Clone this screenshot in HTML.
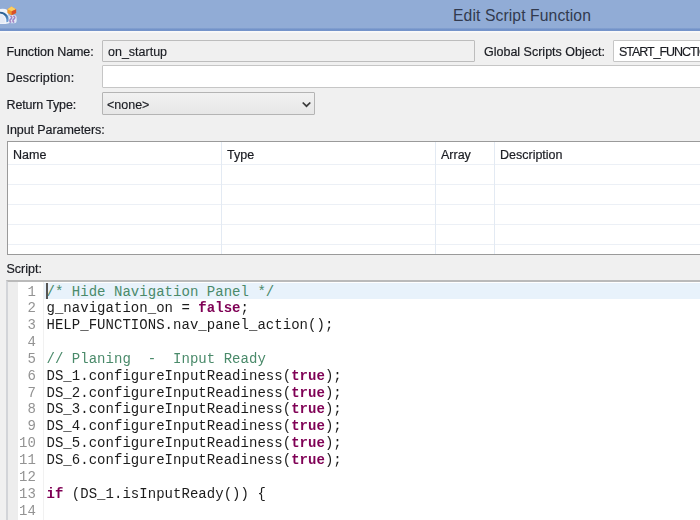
<!DOCTYPE html>
<html>
<head>
<meta charset="utf-8">
<style>
html,body{margin:0;padding:0;}
body{width:700px;height:520px;overflow:hidden;background:#f0f0f0;font-family:"Liberation Sans",sans-serif;position:relative;color:#1a1a1a;}
.abs{position:absolute;}
#titlebar{left:0;top:0;width:700px;height:31px;background:#91acd6;}
#titleline{left:0;top:28px;width:700px;height:3px;background:linear-gradient(#86a3d2,#6f90c7 60%,#7a98cc);}
#titlehl{left:0;top:31px;width:700px;height:2px;background:linear-gradient(#fbfbfb,#f5f5f5);}
#title{left:453px;top:7px;font-size:15.7px;color:#323a4e;white-space:nowrap;letter-spacing:0.1px;}
.lbl{font-size:12.5px;color:#1a1c22;white-space:nowrap;-webkit-text-stroke:0.2px #1a1c22;}
.inp{box-sizing:border-box;border:1px solid #c6c6c6;border-radius:1px;background:#fff;font-size:12.5px;white-space:nowrap;overflow:hidden;}
.inp span{position:absolute;left:5px;top:4px;color:#1a1c22;-webkit-text-stroke:0.15px #1a1c22;}
#table{left:7px;top:141px;width:700px;height:114px;background:#fff;border:1px solid #9a9a9a;border-right:none;box-sizing:border-box;}
.hl{position:absolute;left:0;width:700px;height:1px;background:#ecf0f6;}
.vl{position:absolute;top:0;width:1px;height:112px;background:#e3eaf3;}
.th{position:absolute;top:6px;font-size:12.5px;color:#1a1c22;-webkit-text-stroke:0.2px #1a1c22;}
#editor{left:6px;top:280px;width:700px;height:241px;background:#fff;border-top:2px solid #bababa;border-left:2px solid #d2d4d8;box-sizing:border-box;}
#curline{left:44px;top:283px;width:656px;height:16px;background:#e8f2fb;}
#gutter{left:8px;top:282px;width:10px;height:238px;background:#ededed;}
.ln{position:absolute;left:8px;width:28.1px;text-align:right;font-family:"Liberation Mono",monospace;font-size:14px;letter-spacing:0.1px;color:#939393;height:17px;line-height:17px;}
.code{position:absolute;left:46.5px;letter-spacing:0.035px;font-family:"Liberation Mono",monospace;font-size:14px;height:17px;line-height:17px;white-space:pre;color:#1c1c1c;}
.c{color:#4a8a6a;}
.k{color:#7f0055;font-weight:bold;}
</style>
</head>
<body>
<div id="wrap" style="position:absolute;left:0;top:0;width:700px;height:520px;filter:blur(0.4px);">
<div id="titlebar" class="abs"></div>
<div id="titleline" class="abs"></div>
<div id="titlehl" class="abs"></div>
<svg class="abs" style="left:0;top:5px" width="18" height="20" viewBox="0 0 18 20">
  <defs><linearGradient id="sw" x1="0" y1="0" x2="0.6" y2="1"><stop offset="0" stop-color="#2c5c8c"/><stop offset="0.5" stop-color="#2f6aa0"/><stop offset="1" stop-color="#6a9bd2"/></linearGradient></defs>
  <path d="M0 4 Q5 3.4 7.4 5 L8.6 10.4 L9 18.2 Q4 19.4 0 19 Z" fill="#f6f8fc" opacity="0.95"/>
  <rect x="8.6" y="10" width="8" height="8.2" rx="2.5" fill="#eef1f9" opacity="0.85"/>
  <path d="M0 9 Q3.4 9.6 4.6 13 Q5.2 16 4.8 17.8 Q2 18.4 0 18.2 Z" fill="#e4eaf5"/>
  <path d="M0 6.8 Q5 7 7.6 10.6 Q9.2 13.5 8.6 16 Q8 17.3 6.4 17.3 Q6.8 13.6 5.2 11.2 Q3.4 8.8 0 8.5 Z" fill="url(#sw)"/>
  <path d="M11.5 1.5 L16.1 4.3 L16.1 8 L11.6 10.2 L7.4 8 L7.4 4.3 Z" fill="#f0962a"/>
  <path d="M11.5 1.5 L16.1 4.3 L11.7 6.3 L7.4 4.3 Z" fill="#fbcf62"/>
  <path d="M11.7 6.3 L16.1 4.3 L16.1 8 L11.6 10.2 Z" fill="#d9502a"/>
  <path d="M10.4 10.9 q2.4 1.6 0.4 3.3 q-2 1.6 0.4 3.3 M13.4 10.9 q2.4 1.6 0.4 3.3 q-2 1.6 0.4 3.3" stroke="#9584cc" stroke-width="1.5" fill="none"/>
  <path d="M11.9 12 l0.1 0 M10 16 l0.1 0 M14.9 12.2 l0.1 0 M13 16 l0.1 0" stroke="#d88aa8" stroke-width="1" stroke-linecap="round"/>
</svg>
<div id="title" class="abs">Edit Script Function</div>

<div class="abs lbl" style="left:6.5px;top:45px;letter-spacing:-0.08px">Function Name:</div>
<div class="abs inp" style="left:102px;top:40px;width:373px;height:22px;background:#f0f0f0;border-color:#bdbdbd;"><span>on_startup</span></div>
<div class="abs lbl" style="left:484px;top:45px;">Global Scripts Object:</div>
<div class="abs inp" style="left:613px;top:40px;width:100px;height:22px;"><span style="left:5px;letter-spacing:-1.05px">START_FUNCTIONS</span></div>

<div class="abs lbl" style="left:6.5px;top:71px;letter-spacing:0.15px">Description:</div>
<div class="abs inp" style="left:102px;top:65px;width:610px;height:23px;"></div>

<div class="abs lbl" style="left:6.5px;top:98px;letter-spacing:-0.15px">Return Type:</div>
<div class="abs inp" style="left:102px;top:92px;width:213px;height:23px;background:linear-gradient(#f1f1f1,#e7e7e7);border-color:#b4b4b4;"><span style="left:4px;top:5px">&lt;none&gt;</span>
<svg style="position:absolute;left:197.7px;top:8px" width="12" height="8" viewBox="0 0 12 8"><path d="M1.7 1.5 L5.5 5.2 L9.3 1.5" stroke="#3a3a3a" stroke-width="1.7" fill="none"/></svg>
</div>

<div class="abs lbl" style="left:6.5px;top:123px;letter-spacing:-0.07px">Input Parameters:</div>

<div id="table" class="abs">
  <div class="hl" style="top:22px"></div>
  <div class="hl" style="top:42px"></div>
  <div class="hl" style="top:62px"></div>
  <div class="hl" style="top:82px"></div>
  <div class="hl" style="top:102px"></div>
  <div class="vl" style="left:213px"></div>
  <div class="vl" style="left:427px"></div>
  <div class="vl" style="left:486px"></div>
  <div class="th" style="left:5px">Name</div>
  <div class="th" style="left:219px">Type</div>
  <div class="th" style="left:433px">Array</div>
  <div class="th" style="left:492px">Description</div>
</div>

<div class="abs lbl" style="left:6.5px;top:262px;">Script:</div>

<div id="editor" class="abs"></div>
<div id="curline" class="abs"></div>
<div id="gutter" class="abs"></div>
<div class="abs" style="left:43px;top:282px;width:1px;height:238px;background:#f1f1f1;"></div>
<div id="lines">
<div class="ln" style="top:284px">1</div><div class="code" style="top:284px"><span class="c">/* Hide Navigation Panel */</span></div>
<div class="ln" style="top:300px">2</div><div class="code" style="top:300px">g_navigation_on = <span class="k">false</span>;</div>
<div class="ln" style="top:317px">3</div><div class="code" style="top:317px">HELP_FUNCTIONS.nav_panel_action();</div>
<div class="ln" style="top:334px">4</div><div class="code" style="top:334px"></div>
<div class="ln" style="top:351px">5</div><div class="code" style="top:351px"><span class="c">// Planing  -  Input Ready</span></div>
<div class="ln" style="top:368px">6</div><div class="code" style="top:368px">DS_1.configureInputReadiness(<span class="k">true</span>);</div>
<div class="ln" style="top:385px">7</div><div class="code" style="top:385px">DS_2.configureInputReadiness(<span class="k">true</span>);</div>
<div class="ln" style="top:401px">8</div><div class="code" style="top:401px">DS_3.configureInputReadiness(<span class="k">true</span>);</div>
<div class="ln" style="top:418px">9</div><div class="code" style="top:418px">DS_4.configureInputReadiness(<span class="k">true</span>);</div>
<div class="ln" style="top:435px">10</div><div class="code" style="top:435px">DS_5.configureInputReadiness(<span class="k">true</span>);</div>
<div class="ln" style="top:452px">11</div><div class="code" style="top:452px">DS_6.configureInputReadiness(<span class="k">true</span>);</div>
<div class="ln" style="top:469px">12</div><div class="code" style="top:469px"></div>
<div class="ln" style="top:486px">13</div><div class="code" style="top:486px"><span class="k">if</span> (DS_1.isInputReady()) {</div>
<div class="ln" style="top:503px">14</div><div class="code" style="top:503px"></div>
</div>

<div class="abs" style="left:46px;top:283px;width:2px;height:16px;background:#555;"></div>
</div>
</body>
</html>
